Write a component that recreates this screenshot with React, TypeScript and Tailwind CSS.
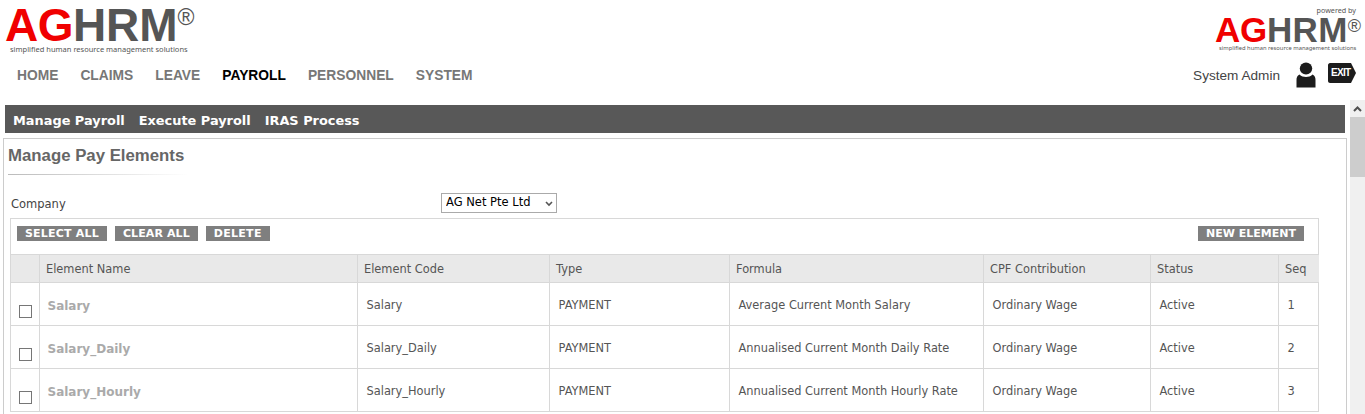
const COLUMNS = [
  { label: 'Element Name', width: 'w-[318px]' },
  { label: 'Element Code', width: 'w-[192px]' },
  { label: 'Type', width: 'w-[180px]' },
  { label: 'Formula', width: 'w-[254px]' },
  { label: 'CPF Contribution', width: 'w-[167px]' },
  { label: 'Status', width: 'w-[128px]' },
  { label: 'Seq', width: 'w-[41px]' },
];

const ROWS = [
  { name: 'Salary', formula: 'Average Current Month Salary', seq: 1 },
  { name: 'Salary_Daily', formula: 'Annualised Current Month Daily Rate', seq: 2 },
  { name: 'Salary_Hourly', formula: 'Annualised Current Month Hourly Rate', seq: 3 },
];

const MENU = ['HOME', 'CLAIMS', 'LEAVE', 'PAYROLL', 'PERSONNEL', 'SYSTEM'];

function ActionButton({ children, className = 'tracking-[0.3px]' }: { children: string; className?: string }) {
  return (
    <button className={`h-[15px] bg-[#7f7f7f] px-2 text-[11px] leading-[15px] font-bold text-white ${className}`}>
      {children}
    </button>
  );
}

function LargeLogo() {
  return (
    <div className="w-[200px] pl-[5px] font-['Liberation_Sans',Arial,sans-serif]">
      <div className="flex h-[44px] items-start leading-none">
        <span className="mt-[2px] text-[46px] leading-[46px] font-bold tracking-[-0.5px] text-[#f00000]">AG</span>
        <span className="mt-[2px] text-[46px] leading-[46px] font-bold tracking-[-0.1px] text-[#555555]">HRM</span>
        <span className="mt-[6px] text-[23px] leading-[23px] text-[#555555]">®</span>
      </div>
      <div className="pl-[5px] font-['Noto_Sans',sans-serif] text-[7.5px] leading-[10px] whitespace-nowrap text-[#555555]">
        simplified human resource management solutions
      </div>
    </div>
  );
}

function SmallLogo() {
  return (
    <div className="flex w-[149px] flex-col font-['Liberation_Sans',Arial,sans-serif]">
      <div className="pr-[8px] text-right font-['Noto_Sans',sans-serif] text-[7.2px] leading-[10px] text-[#555555]">
        powered by
      </div>
      <div className="flex h-[29px] items-start leading-none">
        <span className="text-[35px] leading-[30px] font-bold tracking-[-0.3px] text-[#f00000]">AG</span>
        <span className="text-[35px] leading-[30px] font-bold tracking-[0.4px] text-[#555555]">HRM</span>
        <span className="mt-[2px] text-[18px] leading-[18px] text-[#555555]">®</span>
      </div>
      <div className="pl-[4px] font-['Noto_Sans',sans-serif] text-[5.8px] leading-[8px] whitespace-nowrap text-[#555555]">
        simplified human resource management solutions
      </div>
    </div>
  );
}

function UserIcon() {
  return (
    <svg width="20" height="26" viewBox="0 0 20 26" className="shrink-0">
      <ellipse cx="10" cy="6.5" rx="6.2" ry="6" fill="#1c1c1c" />
      <path d="M3.5 12.5C1.2 13.5.5 15.5.5 18v7.5h19V18c0-2.5-.7-4.5-3-5.5-1.8 1.8-4 2.5-6.5 2.5s-4.7-.7-6.5-2.5z" fill="#1c1c1c" />
    </svg>
  );
}

function ExitIcon() {
  return (
    <div className="relative h-[20px] w-[28px] shrink-0">
      <svg width="28" height="20" viewBox="0 0 28 20" className="absolute inset-0">
        <path d="M2 0h21l5 10-5 10H2c-1 0-2-1-2-2V2c0-1 1-2 2-2z" fill="#1c1c1c" />
      </svg>
      <span className="absolute top-[3px] left-[3px] font-['Liberation_Sans',Arial,sans-serif] text-[10px] leading-[14px] font-bold tracking-[-0.7px] text-white">
        EXIT
      </span>
    </div>
  );
}

export default function App() {
  return (
    <div className="flex h-[414px] flex-col overflow-hidden bg-white">
      <div className="flex h-[100px] shrink-0">
        <div className="flex-1">
          <LargeLogo />
          <div className="mt-[11px] flex h-[22px] items-center gap-[22px] pl-[17px] font-['Liberation_Sans',Arial,sans-serif] text-[13.8px] font-bold">
            {MENU.map(item => (
              <span key={item} className={item === 'PAYROLL' ? 'text-black' : 'text-[#777777]'}>
                {item}
              </span>
            ))}
          </div>
        </div>
        <div className="flex w-[200px] flex-col items-end">
          <div className="pt-[5px] pr-px">
            <SmallLogo />
          </div>
          <div className="mt-[8px] flex items-start pr-[9px]">
            <span className="mt-[8px] font-['Liberation_Sans',Arial,sans-serif] text-[13.6px] leading-[16px] whitespace-nowrap text-[#444444]">
              System Admin
            </span>
            <div className="mt-[2px] ml-[16px]">
              <UserIcon />
            </div>
            <div className="mt-[3px] ml-[12px]">
              <ExitIcon />
            </div>
          </div>
        </div>
      </div>

      <div className="flex min-h-0 flex-1">
        <div className="min-w-0 flex-1 pt-[5px]">
          <div className="mr-[5px] ml-[5px] flex h-[28px] items-center gap-[14px] bg-[#585858] pt-[3px] pl-[8px] font-['DejaVu_Sans',Verdana,sans-serif] text-[12.9px] font-bold text-white">
            <span>Manage Payroll</span>
            <span>Execute Payroll</span>
            <span>IRAS Process</span>
          </div>

          <div className="mt-[5px] mr-[3px] ml-[3px] h-[400px] border border-[#cccccc] font-['DejaVu_Sans',Verdana,sans-serif] text-[#555555]">
            <h1 className="pt-[7px] pl-[4px] font-['Liberation_Sans',Arial,sans-serif] text-[16.8px] leading-[20px] font-bold text-[#666666]">
              Manage Pay Elements
            </h1>
            <div className="mt-[8px] ml-[4px] h-px w-[180px] bg-gradient-to-r from-[#bbbbbb] to-white" />

            <div className="mt-[18px] flex h-[20px] items-center">
              <label className="w-[437px] pt-[4px] pl-[7px] text-[11.5px] text-[#444444]">Company</label>
              <div className="relative h-[20px] w-[116px]">
                <select className="block h-[20px] w-[116px] appearance-none border border-[#aaaaaa] bg-white pl-[4px] font-['DejaVu_Sans',Verdana,sans-serif] text-[11.5px] text-black">
                  <option>AG Net Pte Ltd</option>
                </select>
                <svg width="8" height="6" viewBox="0 0 8 6" className="pointer-events-none absolute top-[8px] right-[4px]">
                  <path d="M1 1l3 3 3-3" fill="none" stroke="#555555" strokeWidth="1.6" />
                </svg>
              </div>
            </div>

            <div className="mt-[5px] ml-[6px] w-[1309px] border border-b-0 border-[#d8d8d8]">
              <div className="flex h-[35px] items-start justify-between pt-[7px] pr-[14px] pl-[6px]">
                <div className="flex gap-[8px]">
                  <ActionButton className="tracking-[0.2px]">SELECT ALL</ActionButton>
                  <ActionButton className="tracking-[0.1px]">CLEAR ALL</ActionButton>
                  <ActionButton>DELETE</ActionButton>
                </div>
                <ActionButton className="tracking-[0px]">NEW ELEMENT</ActionButton>
              </div>

              <table className="w-full table-fixed border-collapse text-[11.4px]">
                <thead>
                  <tr className="h-[28px] bg-[#e9e9e9]">
                    <th className="w-[28px] border border-l-0 border-[#d8d8d8]" />
                    {COLUMNS.map((col, i) => (
                      <th
                        key={col.label}
                        className={`${col.width} border border-[#d8d8d8] pt-[2px] pl-[6.5px] text-left font-normal ${i === COLUMNS.length - 1 ? 'border-r-0' : ''}`}
                      >
                        {col.label}
                      </th>
                    ))}
                  </tr>
                </thead>
                <tbody>
                  {ROWS.map(row => (
                    <tr key={row.name} className="h-[43px]">
                      <td className="border border-l-0 border-[#d8d8d8] pt-[14px] pl-[8px]">
                        <span className="block h-[13px] w-[13px] border border-[#767676] bg-white" />
                      </td>
                      <td className="border border-[#d8d8d8] pt-[3px] pl-[8px] text-[12px] font-bold text-[#aaaaaa]">{row.name}</td>
                      <td className="border border-[#d8d8d8] pt-[3px] pl-[9px]">{row.name}</td>
                      <td className="border border-[#d8d8d8] pt-[3px] pl-[9px]">PAYMENT</td>
                      <td className="border border-[#d8d8d8] pt-[3px] pl-[9px]">{row.formula}</td>
                      <td className="border border-[#d8d8d8] pt-[3px] pl-[9px]">Ordinary Wage</td>
                      <td className="border border-[#d8d8d8] pt-[3px] pl-[9px]">Active</td>
                      <td className="border border-r-0 border-[#d8d8d8] pt-[3px] pl-[9px]">{row.seq}</td>
                    </tr>
                  ))}
                </tbody>
              </table>
            </div>
          </div>
        </div>

        <div className="flex w-[15px] shrink-0 flex-col bg-[#f0f0f0]">
          <div className="flex h-[17px] items-center justify-center">
            <svg width="9" height="6" viewBox="0 0 9 6">
              <path d="M1 5l3.5-3.5L8 5" fill="none" stroke="#505050" strokeWidth="2" />
            </svg>
          </div>
          <div className="h-[60px] bg-[#cdcdcd]" />
        </div>
      </div>
    </div>
  );
}
